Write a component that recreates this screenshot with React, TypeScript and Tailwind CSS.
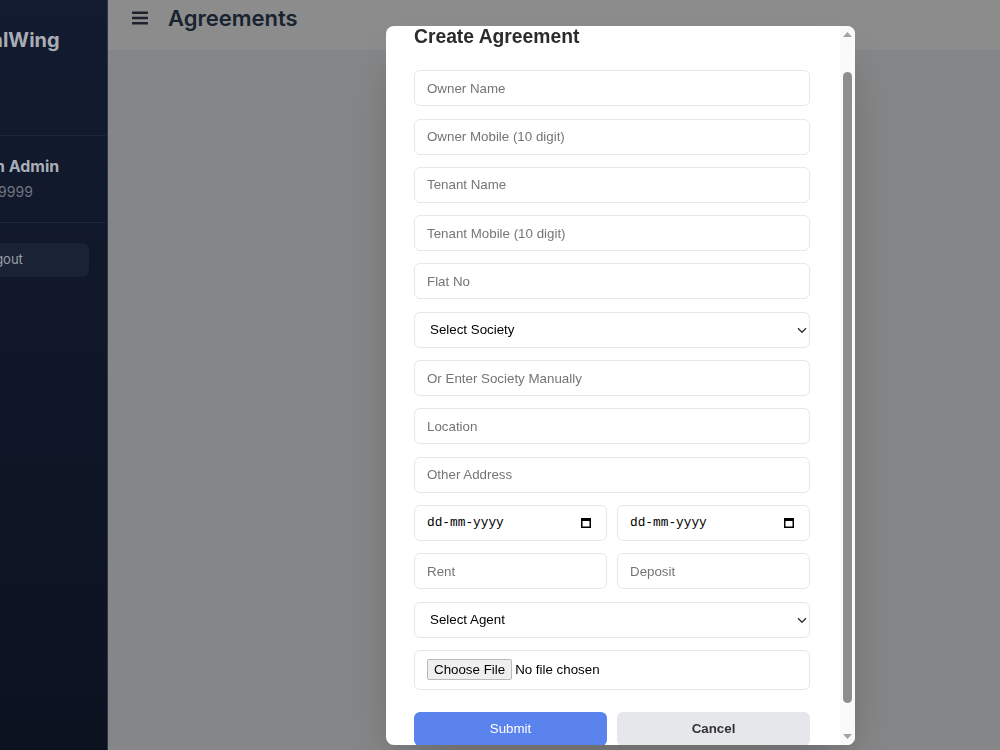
import { useState } from 'react';

const inputBase =
    "w-full h-[36px] rounded-md border border-gray-200 bg-white px-3 text-[13.33px] text-black font-['Liberation_Sans',Arial,sans-serif] placeholder:text-[#757575] outline-none";

function TextField({ placeholder }: { placeholder: string }) {
    return <input type="text" placeholder={placeholder} className={inputBase} />;
}

function SelectField({ label }: { label: string }) {
    return (
        <div className="relative">
            <select className={`${inputBase} appearance-none pl-[15px]`} defaultValue="">
                <option value="">{label}</option>
            </select>
            {/* chevron */}
            <svg className="pointer-events-none absolute right-[3px] top-[15px] w-[10px] h-[7px]" viewBox="0 0 10 7" fill="none">
                <path d="M1 1.2l4 4 4-4" stroke="#333" strokeWidth="1.4" />
            </svg>
        </div>
    );
}

function DateField() {
    return (
        <div className="h-[36px] rounded-md border border-gray-200 bg-white pl-3 pr-[15px] flex items-center justify-between">
            <span className="font-['Liberation_Mono',monospace] text-[12.8px] text-black">dd-mm-yyyy</span>
            <svg className="w-[10px] h-[11px]" viewBox="0 0 10 11" fill="none">
                <rect x="0.75" y="1.75" width="8.5" height="8.5" stroke="#000" strokeWidth="1.5" />
                <rect x="0.5" y="1.5" width="9" height="2.5" fill="#000" />
            </svg>
        </div>
    );
}

function FileField() {
    return (
        <div className="h-[40px] rounded-md border border-gray-200 bg-white px-3 flex items-center font-['Liberation_Sans',Arial,sans-serif] text-[13.33px] text-black">
            <span className="h-[21px] px-[6px] flex items-center bg-[#efefef] border border-[#b9b9b9] rounded-[2px]">Choose File</span>
            <span className="ml-[3px]">No file chosen</span>
        </div>
    );
}

function Scrollbar() {
    return (
        <div className="w-[15px] shrink-0 bg-[#fafafa] flex flex-col items-center">
            <div className="h-[17px] flex items-center justify-center">
                <svg className="w-[9px] h-[5px]" viewBox="0 0 9 5">
                    <path d="M0 5L4.5 0L9 5z" fill="#a3a3a3" />
                </svg>
            </div>
            <div className="flex-1 w-full flex justify-center pt-[29px] pb-[25px]">
                <div className="w-[9px] rounded-full bg-[#8e8e8e]" />
            </div>
            <div className="h-[17px] flex items-center justify-center">
                <svg className="w-[9px] h-[5px]" viewBox="0 0 9 5">
                    <path d="M0 0L4.5 5L9 0z" fill="#a3a3a3" />
                </svg>
            </div>
        </div>
    );
}

export default function App() {
    const [open] = useState(true);

    return (
        <div className="h-screen w-full flex overflow-hidden bg-gray-100 font-['Inter',sans-serif]">
            {/* Sidebar (partly slid out) */}
            <aside className="relative z-50 w-[108px] shrink-0 overflow-hidden bg-linear-to-b from-[#131b30] to-[#0c1220] border-r border-[#2c3548]">
                <div className="w-[176px] -ml-[70px]">
                    <div className="h-[136px] px-4 pt-[26px] border-b border-[#1e2739]">
                        <div className="text-xl leading-7 font-bold text-[#a9adb5] whitespace-nowrap">DigitalWing</div>
                    </div>
                    <div className="px-4 pt-[18px] pb-5 border-b border-[#1e2739]">
                        <div className="text-base leading-6 font-bold text-[#aaaeb6] whitespace-nowrap">System Admin</div>
                        <div className="mt-1 text-sm leading-5 text-[#6f7480]">9999999999</div>
                    </div>
                    <div className="pl-4 pr-[17px] pt-5">
                        <button className="w-full h-[34px] rounded-lg bg-[#1a2336] pl-3 flex items-center gap-2 text-[13px] text-[#9ca0a8]">
                            <svg className="w-[14px] h-[14px]" viewBox="0 0 24 24" fill="none" stroke="currentColor" strokeWidth={2}>
                                <path d="M9 21H5a2 2 0 01-2-2V5a2 2 0 012-2h4M16 17l5-5-5-5M21 12H9" />
                            </svg>
                            Logout
                        </button>
                    </div>
                </div>
            </aside>

            {/* Main */}
            <main className="flex-1 flex flex-col">
                <header className="h-[50px] shrink-0 bg-white px-6 pt-[2px]">
                    <div className="h-8 flex items-center gap-5">
                        <svg className="w-4 h-[14px]" viewBox="0 0 16 14" fill="#334155">
                            <rect x="0" y="0.5" width="16" height="2.4" rx="0.6" />
                            <rect x="0" y="5.8" width="16" height="2.4" rx="0.6" />
                            <rect x="0" y="11.1" width="16" height="2.4" rx="0.6" />
                        </svg>
                        <h1 className="text-[22px] leading-8 font-semibold text-slate-700">Agreements</h1>
                    </div>
                </header>
                <div className="flex-1 bg-gray-100" />
            </main>

            {/* Modal */}
            {open && (
                <div className="fixed inset-0 z-40 bg-black/45 flex items-start">
                    <div className="mt-[26px] ml-[386px] w-[469px] h-[719px] bg-white rounded-lg overflow-hidden flex shadow-2xl">
                        <div className="flex-1 min-w-0 overflow-hidden pl-7 pr-[30px] pt-px">
                            <h2 className="text-[19.3px] leading-none font-bold text-[#2b2b2b] font-['Liberation_Sans',Arial,sans-serif]">
                                Create Agreement
                            </h2>
                            <form className="mt-[24px] flex flex-col gap-[12.3px]">
                                <TextField placeholder="Owner Name" />
                                <TextField placeholder="Owner Mobile (10 digit)" />
                                <TextField placeholder="Tenant Name" />
                                <TextField placeholder="Tenant Mobile (10 digit)" />
                                <TextField placeholder="Flat No" />
                                <SelectField label="Select Society" />
                                <TextField placeholder="Or Enter Society Manually" />
                                <TextField placeholder="Location" />
                                <TextField placeholder="Other Address" />
                                <div className="grid grid-cols-2 gap-[10px]">
                                    <DateField />
                                    <DateField />
                                </div>
                                <div className="grid grid-cols-2 gap-[10px]">
                                    <TextField placeholder="Rent" />
                                    <TextField placeholder="Deposit" />
                                </div>
                                <SelectField label="Select Agent" />
                                <FileField />
                                <div className="mt-[10px] grid grid-cols-2 gap-[10px] font-['Liberation_Sans',Arial,sans-serif] text-[13.33px]">
                                    <button type="button" className="h-[34px] rounded-md bg-[#5a83ee] text-white">
                                        Submit
                                    </button>
                                    <button type="button" className="h-[34px] rounded-md bg-gray-200 font-bold text-[#333]">
                                        Cancel
                                    </button>
                                </div>
                            </form>
                        </div>
                        <Scrollbar />
                    </div>
                </div>
            )}
        </div>
    );
}
